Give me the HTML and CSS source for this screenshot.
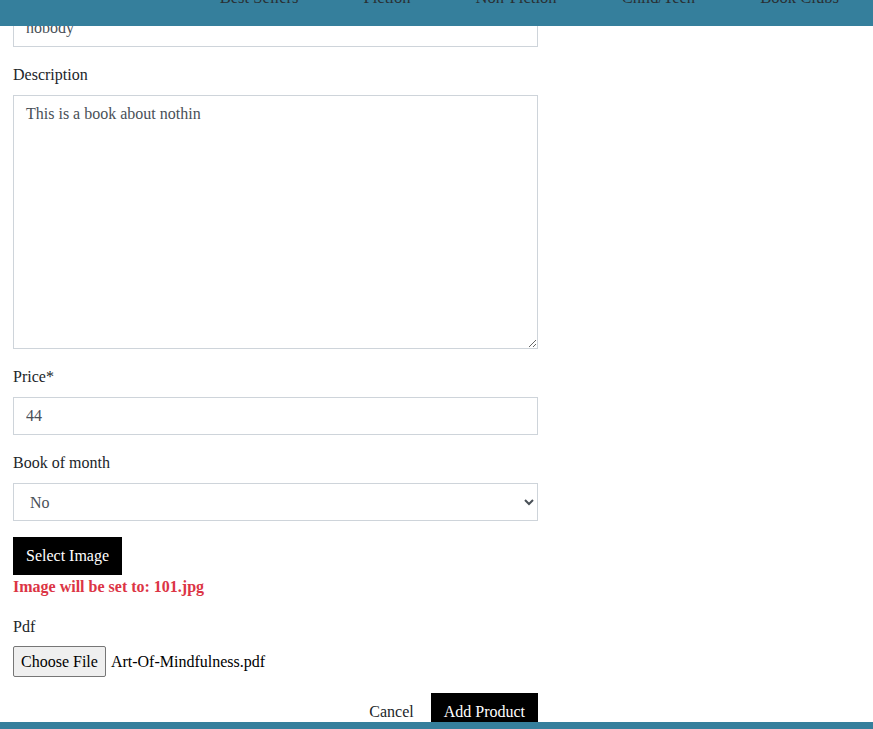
FILE: index.html
```html
<!DOCTYPE html>
<html lang="en">
<head>
<meta charset="utf-8">
<title>Add Product</title>
<link rel="stylesheet" href="styles.css">
</head>
<body>
<header class="topbar">
  <nav class="nav">
    <a class="nav-link" href="#">Best Sellers</a>
    <a class="nav-link" href="#">Fiction</a>
    <a class="nav-link" href="#">Non-Fiction</a>
    <a class="nav-link" href="#">Child/Teen</a>
    <a class="nav-link" href="#">Book Clubs</a>
  </nav>
</header>

<main class="form">
  <div class="group">
    <input class="control" type="text" value="nobody">
  </div>
  <div class="group">
    <label class="label">Description</label>
    <textarea class="control area">This is a book about nothin</textarea>
  </div>
  <div class="group">
    <label class="label">Price*</label>
    <input class="control" type="text" value="44">
  </div>
  <div class="group">
    <label class="label">Book of month</label>
    <select class="control select">
      <option>No</option>
      <option>Yes</option>
    </select>
  </div>
  <div class="image-group">
    <button class="btn-dark" type="button">Select Image</button>
    <p class="notice">Image will be set to: 101.jpg</p>
  </div>
  <div class="group">
    <label class="label">Pdf</label>
    <div class="file">
      <button class="file-btn" type="button">Choose File</button>
      <span class="file-name">Art-Of-Mindfulness.pdf</span>
    </div>
  </div>
  <div class="actions">
    <button class="btn-link" type="button">Cancel</button>
    <button class="btn-dark" type="button">Add Product</button>
  </div>
</main>

<footer class="bottombar"></footer>
</body>
</html>
```

FILE: styles.css
```css
html, body {
  margin: 0;
  padding: 0;
  background: #fff;
}
body {
  font-family: "Liberation Serif", "Times New Roman", serif;
  font-size: 16px;
  line-height: 1.5;
  color: #212529;
}
.topbar {
  position: fixed;
  top: 0;
  left: 0;
  right: 0;
  height: 26px;
  background: #357f9c;
  overflow: hidden;
  z-index: 10;
}
.nav {
  display: flex;
  justify-content: flex-end;
  gap: 65px;
  padding-right: 34px;
  margin-top: -11px;
  line-height: 18px;
}
.nav-link {
  color: #2a2f33;
  text-decoration: none;
  font-size: 16.6px;
}
.form {
  width: 525px;
  padding: 9px 13px 40px;
}
.group {
  margin-bottom: 16px;
}
.label {
  display: block;
  margin-bottom: 8px;
  line-height: 24px;
}
.control {
  display: block;
  box-sizing: border-box;
  width: 100%;
  height: 38px;
  margin: 0;
  padding: 6px 12px;
  font-family: inherit;
  font-size: 16px;
  line-height: 24px;
  color: #495057;
  background: #fff;
  border: 1px solid #ced4da;
  border-radius: 0;
}
.area {
  height: 254px;
  resize: vertical;
}
.select {
  color: #495057;
}
.image-group {
  margin-bottom: 16px;
}
.btn-dark {
  display: inline-block;
  height: 38px;
  padding: 6px 12px;
  font-family: inherit;
  font-size: 16px;
  line-height: 24px;
  color: #fff;
  background: #000;
  border: 1px solid #000;
  border-radius: 0;
}
.notice {
  margin: 0;
  color: #dc3545;
  font-weight: bold;
  line-height: 24px;
}
.file {
  display: flex;
  align-items: center;
  gap: 5px;
  margin-top: -1px;
  height: 31px;
}
.file-btn {
  height: 31px;
  padding: 0 7px;
  font-family: inherit;
  font-size: 16px;
  color: #000;
  background: #efefef;
  border: 1px solid #767676;
  border-radius: 2px;
}
.file-name {
  color: #000;
}
.actions {
  display: flex;
  justify-content: flex-end;
  align-items: center;
  gap: 5px;
}
.btn-link {
  height: 38px;
  padding: 6px 12px;
  font-family: inherit;
  font-size: 16px;
  line-height: 24px;
  color: #212529;
  background: transparent;
  border: none;
}
.bottombar {
  position: fixed;
  left: 0;
  right: 0;
  bottom: 0;
  height: 7px;
  background: #357f9c;
}
```
